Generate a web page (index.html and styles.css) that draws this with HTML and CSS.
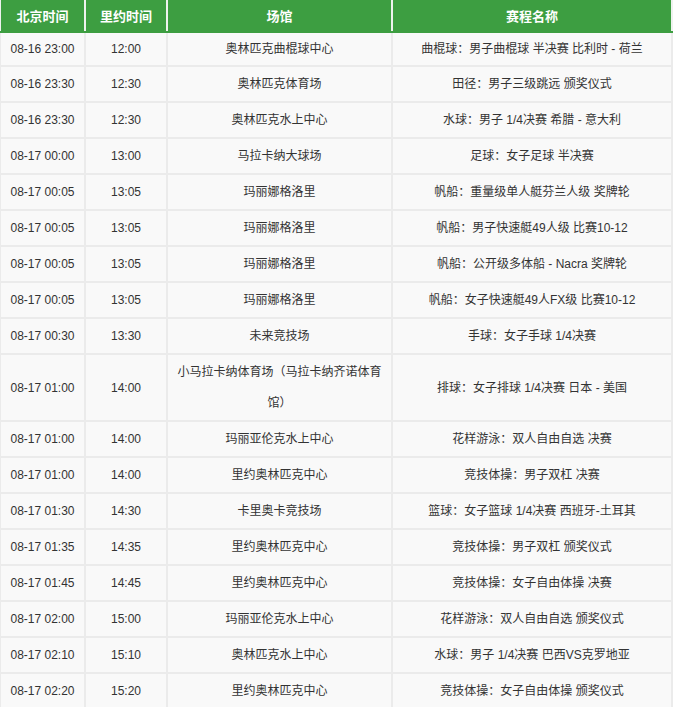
FILE: index.html
```html
<!DOCTYPE html>
<html lang="zh-CN">
<head>
<meta charset="utf-8">
<title>赛程</title>
<link rel="stylesheet" href="styles.css">
</head>
<body>
<table class="schedule">
  <colgroup>
    <col class="c-bj">
    <col class="c-rio">
    <col class="c-venue">
    <col class="c-event">
  </colgroup>
  <thead>
    <tr><th>北京时间</th><th>里约时间</th><th>场馆</th><th>赛程名称</th></tr>
  </thead>
  <tbody>
    <tr><td>08-16 23:00</td><td>12:00</td><td>奥林匹克曲棍球中心</td><td>曲棍球：男子曲棍球 半决赛 比利时 - 荷兰</td></tr>
    <tr><td>08-16 23:30</td><td>12:30</td><td>奥林匹克体育场</td><td>田径：男子三级跳远 颁奖仪式</td></tr>
    <tr><td>08-16 23:30</td><td>12:30</td><td>奥林匹克水上中心</td><td>水球：男子 1/4决赛 希腊 - 意大利</td></tr>
    <tr><td>08-17 00:00</td><td>13:00</td><td>马拉卡纳大球场</td><td>足球：女子足球 半决赛</td></tr>
    <tr><td>08-17 00:05</td><td>13:05</td><td>玛丽娜格洛里</td><td>帆船：重量级单人艇芬兰人级 奖牌轮</td></tr>
    <tr><td>08-17 00:05</td><td>13:05</td><td>玛丽娜格洛里</td><td>帆船：男子快速艇49人级 比赛10-12</td></tr>
    <tr><td>08-17 00:05</td><td>13:05</td><td>玛丽娜格洛里</td><td>帆船：公开级多体船 - Nacra 奖牌轮</td></tr>
    <tr><td>08-17 00:05</td><td>13:05</td><td>玛丽娜格洛里</td><td>帆船：女子快速艇49人FX级 比赛10-12</td></tr>
    <tr><td>08-17 00:30</td><td>13:30</td><td>未来竞技场</td><td>手球：女子手球 1/4决赛</td></tr>
    <tr><td>08-17 01:00</td><td>14:00</td><td>小马拉卡纳体育场（马拉卡纳齐诺体育馆）</td><td>排球：女子排球 1/4决赛 日本 - 美国</td></tr>
    <tr><td>08-17 01:00</td><td>14:00</td><td>玛丽亚伦克水上中心</td><td>花样游泳：双人自由自选 决赛</td></tr>
    <tr><td>08-17 01:00</td><td>14:00</td><td>里约奥林匹克中心</td><td>竞技体操：男子双杠 决赛</td></tr>
    <tr><td>08-17 01:30</td><td>14:30</td><td>卡里奥卡竞技场</td><td>篮球：女子篮球 1/4决赛 西班牙-土耳其</td></tr>
    <tr><td>08-17 01:35</td><td>14:35</td><td>里约奥林匹克中心</td><td>竞技体操：男子双杠 颁奖仪式</td></tr>
    <tr><td>08-17 01:45</td><td>14:45</td><td>里约奥林匹克中心</td><td>竞技体操：女子自由体操 决赛</td></tr>
    <tr><td>08-17 02:00</td><td>15:00</td><td>玛丽亚伦克水上中心</td><td>花样游泳：双人自由自选 颁奖仪式</td></tr>
    <tr><td>08-17 02:10</td><td>15:10</td><td>奥林匹克水上中心</td><td>水球：男子 1/4决赛 巴西VS克罗地亚</td></tr>
    <tr><td>08-17 02:20</td><td>15:20</td><td>里约奥林匹克中心</td><td>竞技体操：女子自由体操 颁奖仪式</td></tr>
  </tbody>
</table>
</body>
</html>
```
FILE: styles.css
```css
html, body {
  margin: 0;
  padding: 0;
  overflow: hidden;
  background: #ffffff;
}

.schedule {
  border-collapse: collapse;
  table-layout: fixed;
  width: 674px;
  margin-left: -1px;
  font-family: "Liberation Sans", "Noto Sans CJK SC", sans-serif;
  font-size: 12px;
  color: #333333;
}

.c-bj { width: 85px; }
.c-rio { width: 82px; }
.c-venue { width: 225px; }
.c-event { width: 280px; }

.schedule th {
  background: #3d9e41;
  color: #ffffff;
  font-family: "Noto Sans CJK SC", sans-serif;
  font-size: 13px;
  font-weight: bold;
  line-height: 31px;
  padding: 0;
  text-align: center;
  border-top: none;
  border-left: 2px solid #eef2ee;
  border-right: 2px solid #eef2ee;
  border-bottom: 2px solid #3d9e41;
}

.schedule td {
  background: #f9f9f9;
  border: 2px solid #ebebeb;
  line-height: 31px;
  padding: 2px 8px 1px;
  text-align: center;
  vertical-align: middle;
}

.schedule tbody tr:first-child td {
  padding-top: 1px;
  padding-bottom: 0;
}
```
